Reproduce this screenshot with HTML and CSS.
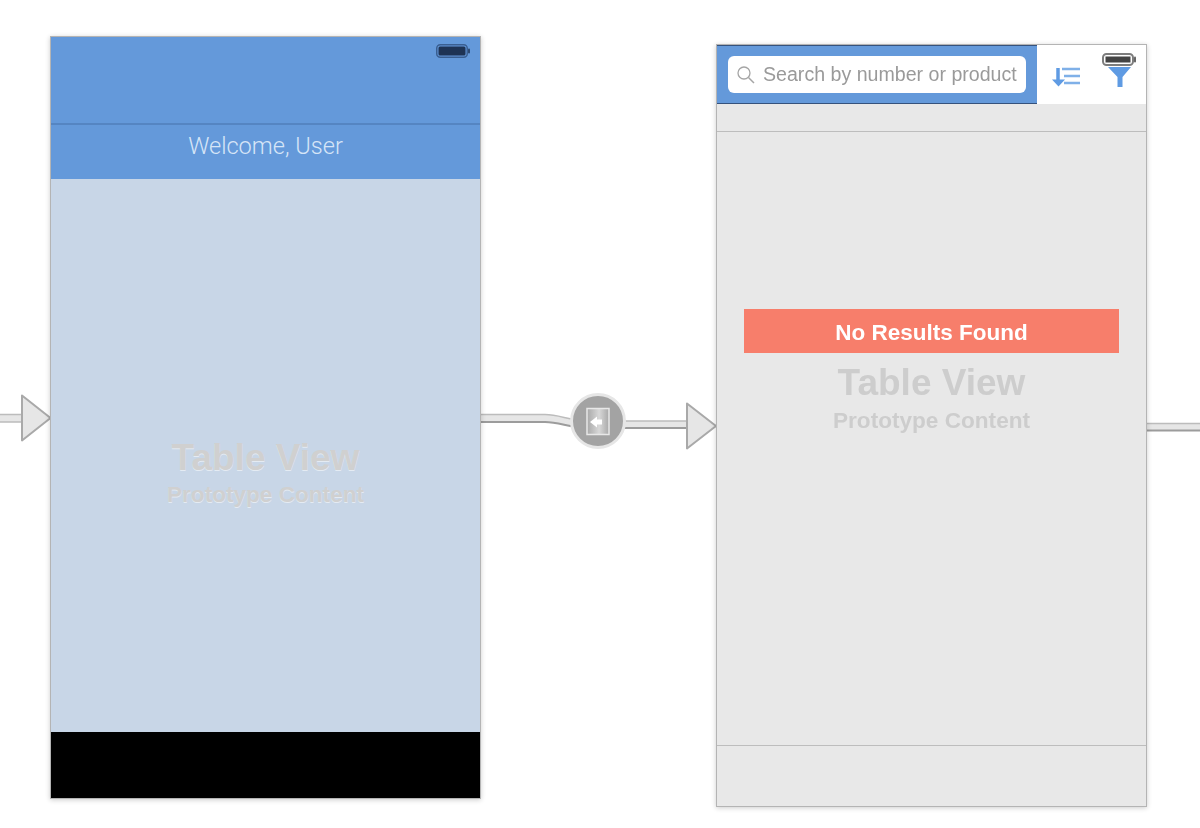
FILE: index.html
```html
<!DOCTYPE html>
<html lang="en">
	<head>
		<meta charset="UTF-8" />
		<meta name="viewport" content="width=device-width, initial-scale=1.0" />
		<title>Storyboard</title>
		<link rel="stylesheet" href="styles.css">
	</head>
	<body>
		<div class="canvas">
			<!-- segues between the scenes -->
			<svg class="segues" width="1200" height="828" viewBox="0 0 1200 828">
				<defs>
					<linearGradient id="door-shade" x1="0" y1="0" x2="1" y2="0">
						<stop offset="0" stop-color="#a8a8a8" />
						<stop offset="0.550" stop-color="#d8d8d8" />
						<stop offset="1" stop-color="#a8a8a8" />
					</linearGradient>
				</defs>

				<path class="line-fill" d="M0 414H24V422H0Z" />
				<path class="line-edge" d="M0 414.500H24M0 422H24" />
				<path class="arrow" d="M22 395.500L50.500 418L22 440.500Z" />

				<path class="line-fill" d="M481 414.500H545C560 414.500 570 421 590 421H690V428H590C570 428 560 422 545 422H481Z" />
				<path class="line-edge" d="M481 414.500H545C560 414.500 570 421 590 421H690" />
				<path class="line-edge-dark" d="M481 422H545C560 422 570 428 590 428H690" />
				<path class="arrow" d="M687 403.500L716 426L687 448.500Z" />

				<path class="line-fill" d="M1147 423H1200V431H1147Z" />
				<path class="line-edge" d="M1147 423.500H1200" />
				<path class="line-edge-dark" d="M1147 430.500H1200" />

				<circle class="badge" cx="598" cy="421" r="26.500" />
				<rect class="badge-door" x="587" y="408.500" width="22" height="26" />
				<path class="badge-arrow" d="M590 422L597 416.500V419.500H602V424.500H597V427.500Z" />
			</svg>

			<section class="scene scene-welcome">
				<header class="welcome-top"></header>
				<div class="welcome-bar">Welcome, User</div>
				<div class="table-body">
					<div class="placeholder placeholder-embossed">
						<div class="placeholder-title">Table View</div>
						<div class="placeholder-sub">Prototype Content</div>
					</div>
				</div>
				<footer class="welcome-foot"></footer>
				<svg class="battery" width="34" height="14" viewBox="0 0 34 14">
					<rect x="0.750" y="0.750" width="30.500" height="12.500" rx="3.500" fill="none" stroke="#3a5f91" stroke-width="1.500" />
					<rect x="2.500" y="2.500" width="27" height="9" rx="1.500" fill="#1e3354" />
					<rect x="32" y="4.500" width="2" height="5" rx="1" fill="#2d4a73" />
				</svg>
			</section>

			<section class="scene scene-search">
				<header class="search-top">
					<div class="search-bar">
						<div class="search-field">
							<svg class="search-icon" width="20" height="20" viewBox="0 0 20 20">
								<circle cx="8" cy="8" r="6" fill="none" stroke="#a5a5a5" stroke-width="1.300" />
								<path d="M12.500 12.500L18 18" stroke="#a5a5a5" stroke-width="1.500" />
							</svg>
							<span>Search by number or product</span>
						</div>
					</div>
					<div class="search-tools">
						<svg class="tool-sort" width="30" height="22" viewBox="0 0 30 22">
							<path d="M6 2V15" stroke="#5f9be3" stroke-width="3.500" />
							<path d="M0 13.500H13L6.500 20.500Z" fill="#5f9be3" />
							<path d="M10 3H28M12 10H28M12 17H28" stroke="#7fb0e8" stroke-width="2.500" />
						</svg>
						<svg class="tool-filter" width="24" height="21" viewBox="0 0 24 21">
							<path d="M0 1H23L14.500 11V21H9.500V11Z" fill="#5f9be3" />
						</svg>
					</div>
				</header>
				<div class="search-strip"></div>
				<div class="results-body">
					<div class="no-results">No Results Found</div>
					<div class="placeholder placeholder-results">
						<div class="placeholder-title">Table View</div>
						<div class="placeholder-sub">Prototype Content</div>
					</div>
				</div>
				<footer class="search-foot"></footer>
				<svg class="battery battery-gray" width="34" height="13" viewBox="0 0 34 13">
					<rect x="1" y="1" width="30" height="11" rx="3.500" fill="#fff" stroke="#7d7d7d" stroke-width="2" />
					<rect x="3.500" y="3.500" width="25" height="6" fill="#444" />
					<rect x="32" y="3.500" width="2" height="6" rx="1" fill="#666" />
				</svg>
			</section>
		</div>
	</body>
</html>
```

FILE: styles.css
```css
* {
	margin: 0;
	padding: 0;
	box-sizing: border-box;
}

html,
body {
	width: 1200px;
	height: 828px;
	overflow: hidden;
	background-color: #fff;
}

body {
	font-family: "Liberation Sans", Arial, sans-serif;
}

/* the reference is a slightly soft upscaled capture */
.canvas {
	position: relative;
	width: 1200px;
	height: 828px;
	filter: blur(0.5px);
}

.segues {
	position: absolute;
	left: 0;
	top: 0;
}

.line-fill {
	fill: #e6e6e6;
}

.line-edge {
	fill: none;
	stroke: #bcbcbc;
	stroke-width: 1.500;
}

.line-edge-dark {
	fill: none;
	stroke: #9c9c9c;
	stroke-width: 2;
}

.arrow {
	fill: #e6e6e6;
	stroke: #a9a9a9;
	stroke-width: 2;
	stroke-linejoin: round;
}

.badge {
	fill: #a3a3a3;
	stroke: #e6e6e6;
	stroke-width: 3;
}

.badge-door {
	fill: url(#door-shade);
	stroke: #e8e8e8;
	stroke-width: 1.500;
}

.badge-arrow {
	fill: #fff;
}

.scene {
	position: absolute;
	display: flex;
	flex-direction: column;
	border: 1px solid #b4b4b4;
	box-shadow: 0 1px 5px rgba(0, 0, 0, 0.2);
}

.scene-welcome {
	left: 50px;
	top: 36px;
	width: 431px;
	height: 763px;
}

.scene-search {
	left: 716px;
	top: 44px;
	width: 431px;
	height: 763px;
	background-color: #e8e8e8;
}

.battery {
	position: absolute;
	left: 385px;
	top: 7px;
}

.battery-gray {
	top: 8px;
}

/* first scene */
.welcome-top {
	height: 88px;
	background-color: #6499da;
	border-bottom: 2px solid #5585c2;
}

.welcome-bar {
	height: 54px;
	background-color: #6499da;
	color: #d6e5f7;
	font-family: Roboto, "Liberation Sans", sans-serif;
	font-size: 23.600px;
	font-weight: 300;
	line-height: 42px;
	text-align: center;
}

.table-body {
	flex: 1;
	display: flex;
	align-items: center;
	justify-content: center;
	padding-top: 36px;
	background-color: #c8d6e7;
}

.welcome-foot {
	height: 66px;
	background-color: #000;
}

.placeholder {
	text-align: center;
	color: #cdcdcd;
	font-weight: bold;
}

.placeholder-title {
	font-size: 37px;
	line-height: 42px;
}

.placeholder-sub {
	font-size: 22.600px;
	line-height: 32px;
}

.placeholder-embossed {
	color: #d0d0d0;
	text-shadow: 0 1px 0 #e4ebf3;
}

.placeholder-results {
	margin-top: 9px;
}

.placeholder-results .placeholder-sub {
	margin-top: 1px;
}

/* second scene */
.search-top {
	display: flex;
	height: 59px;
	background-color: #fff;
}

.search-bar {
	display: flex;
	align-items: center;
	width: 320px;
	padding-left: 11px;
	background-color: #6499da;
	border-top: 1px solid #35527c;
	border-bottom: 1px solid #35527c;
}

.search-field {
	display: flex;
	align-items: center;
	gap: 7px;
	width: 298px;
	height: 37px;
	padding-left: 8px;
	background-color: #fff;
	border-radius: 6px;
	color: #9a9a9a;
	font-size: 19.600px;
	white-space: nowrap;
}

.search-icon {
	flex-shrink: 0;
}

.search-tools {
	flex: 1;
	display: flex;
	padding: 21px 0 0 15px;
	gap: 26px;
}

.search-strip {
	height: 28px;
	border-bottom: 1px solid #bdbdbd;
}

.results-body {
	flex: 1;
	display: flex;
	flex-direction: column;
	padding: 177px 27px 0;
}

.no-results {
	height: 44px;
	background-color: #f77e6b;
	color: #fff;
	font-size: 22.500px;
	font-weight: bold;
	line-height: 47px;
	text-align: center;
}

.search-foot {
	height: 61px;
	border-top: 1px solid #bdbdbd;
}
```
